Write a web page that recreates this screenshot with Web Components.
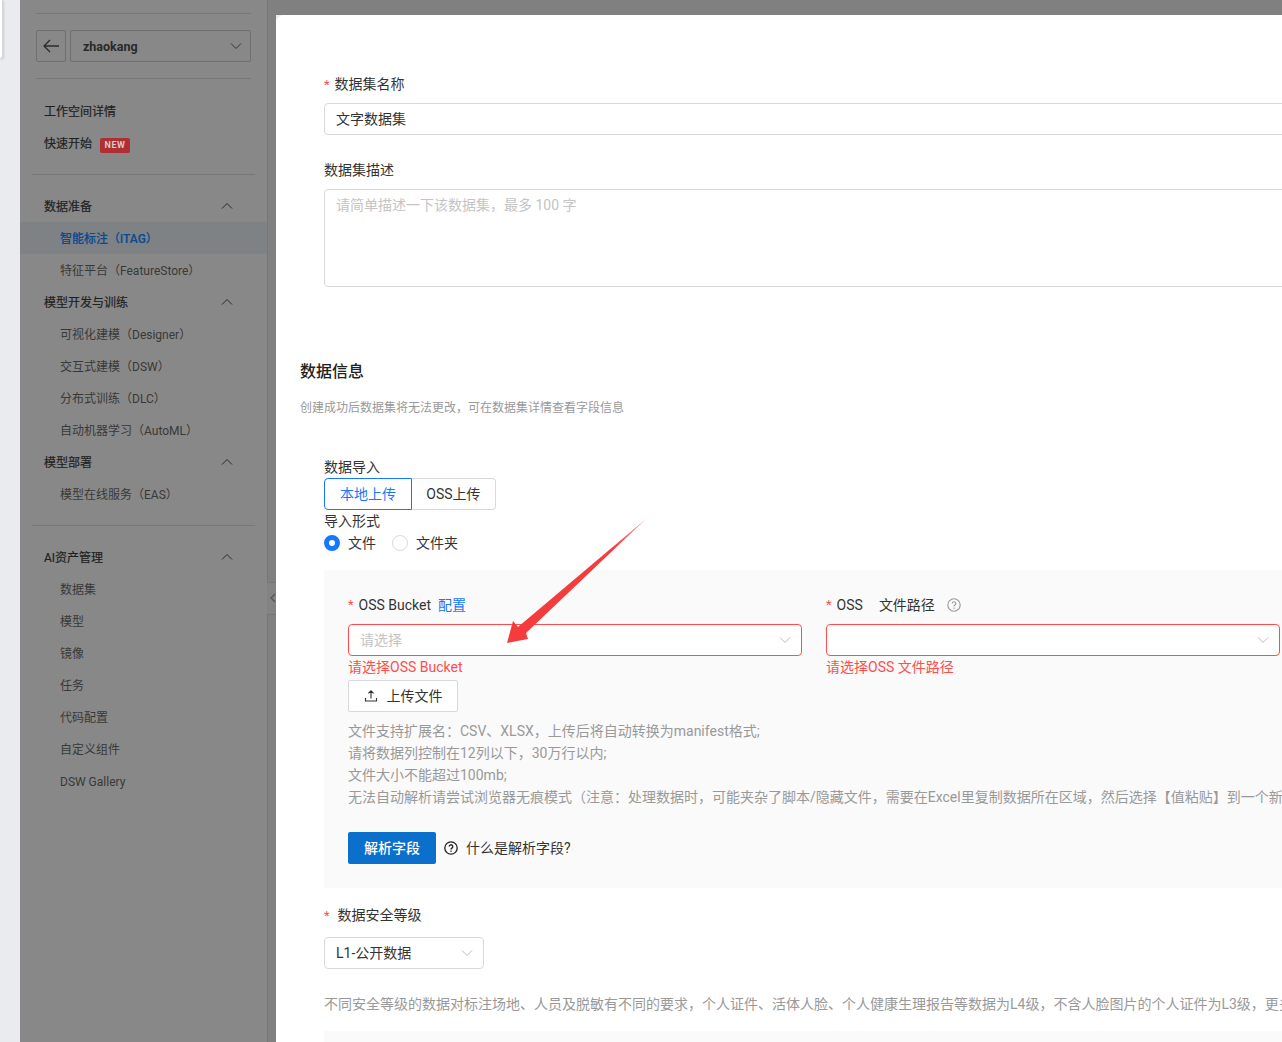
<!DOCTYPE html>
<html lang="zh"><head><meta charset="utf-8">
<style>
html,body{margin:0;height:100%;overflow:hidden}
body{font-family:Roboto,"Noto Sans CJK SC",sans-serif;background:#e9ebee;line-height:20px}
</style></head><body>
<app-shell>
  <side-nav slot="nav"></side-nav>
  <data-form slot="main"></data-form>
</app-shell>
<script>
const CHEV='<svg width="12" height="12" viewBox="0 0 12 12" fill="none" stroke="currentColor" stroke-width="1"><path d="M1 3.5 6 8.5 11 3.5"/></svg>';
const HELP=(c,s,w=1.1)=>`<svg width="${s}" height="${s}" viewBox="0 0 14 14" fill="none" stroke="${c}" stroke-width="${w}"><circle cx="7" cy="7" r="6.2"/><path d="M5.2 5.6a1.8 1.8 0 1 1 2.7 1.5c-.6.35-.9.7-.9 1.4"/><path d="M7 9.6v1.1"/></svg>`;
function def(name,css,html){customElements.define(name,class extends HTMLElement{
  constructor(){super();this.attachShadow({mode:'open'}).innerHTML=`<style>${css}</style>${typeof html==='function'?html(this):html}`}
})}

def('app-shell',`
:host{display:flex;width:1282px;height:1042px;overflow:hidden;position:relative;background:#e9ebee}
.left{width:20px;flex:none;position:relative}
.tab{position:absolute;left:0;top:0;width:2px;height:58px;background:#fff;border-right:1px solid #d5d6d8;border-bottom:1px solid #d5d6d8;border-radius:0 0 3px 0;box-shadow:1px 1px 2px rgba(0,0,0,.12)}
.rail{width:8px;flex:none;background:#808080;position:relative}
.col{position:absolute;left:-1px;top:582px;width:9px;height:33px;border-top:1px solid #777;border-bottom:1px solid #777;background:#838383;box-sizing:border-box}
.col svg{position:absolute;left:3px;top:10px}
.main{flex:none;margin-top:15px;width:1100px;background:#fff;border-radius:8px 0 0 0;overflow:hidden}
.top{position:absolute;left:268px;top:0;width:1014px;height:15px;background:#808080}
`,`<div class="left"><div class="tab"></div></div><slot name="nav"></slot><div class="rail"><div class="col"><svg width="6" height="10" viewBox="0 0 6 10" fill="none" stroke="#555" stroke-width="1.2"><path d="M5 1 1 5 5 9"/></svg></div></div><div class="top"></div><div class="main"><slot name="main"></slot></div>`);

def('nav-item',`
:host{display:flex;align-items:center;height:32px;box-sizing:border-box;padding-left:40px;padding-right:34px;font-size:12px;color:#383838;justify-content:space-between;white-space:nowrap}
:host([head]){padding-left:24px;color:#1f1f1f;-webkit-text-stroke:.2px #1f1f1f}
:host([active]){background:#7e8285;color:#0b4a8f;font-weight:500;-webkit-text-stroke:.15px #0b4a8f}
span{padding-top:2px}
svg{display:block;transform:rotate(180deg)}
`,t=>`<span><slot></slot></span>${t.hasAttribute('head')?CHEV.replace('stroke="currentColor"','stroke="#2b2b2b"'):''}`);

def('side-nav',`
:host{display:block;width:247px;height:1042px;flex:none;background:#888;border-right:1px solid #777;box-sizing:content-box;font-size:12px;color:#222;margin-right:0}
.line{height:1px;background:#777;margin:0 16px}
.top{margin-top:13px}
.sel{display:flex;gap:4px;margin:16px}
.back{width:28px;height:30px;border:1px solid #707070;border-radius:2px;display:flex;align-items:center;justify-content:center}
.box{flex:1;height:30px;border:1px solid #707070;border-radius:2px;display:flex;align-items:center;justify-content:space-between;padding:0 8px 0 12px;font-size:12.5px;font-weight:700;color:#2a2a2a}
.box span{padding-top:2px}
.quick{padding:16px 24px 15px;display:flex;flex-direction:column}
.quick div{height:32px;box-sizing:border-box;padding-top:2px;display:flex;align-items:center;color:#1f1f1f;gap:8px;-webkit-text-stroke:.2px #1f1f1f}
.new{font-size:9px;line-height:13px;height:15px;width:30px;justify-content:center;box-sizing:border-box;border-radius:2px;background:#b02f35;color:#d8c8c8;font-weight:700;display:flex;align-items:center;letter-spacing:.6px;-webkit-text-stroke:0;margin-top:2px}
.groups{padding:15px 0 15px}
.groups2{padding:15px 0}
.l2{margin:0 12px}
nav-item{display:flex}
`,`<div class="line top"></div>
<div class="sel"><div class="back"><svg width="18" height="16" viewBox="0 0 18 16" fill="none" stroke="#2b2b2b" stroke-width="1.3"><path d="M17 8H2M8 2 2 8l6 6"/></svg></div>
<div class="box"><span>zhaokang</span>${CHEV.replace('stroke="currentColor"','stroke="#333"')}</div></div>
<div class="line"></div>
<div class="quick"><div>工作空间详情</div><div>快速开始<span class="new">NEW</span></div></div>
<div class="line l2"></div>
<div class="groups">
<nav-item head>数据准备</nav-item><nav-item active>智能标注（iTAG）</nav-item><nav-item>特征平台（FeatureStore）</nav-item>
<nav-item head>模型开发与训练</nav-item><nav-item>可视化建模（Designer）</nav-item><nav-item>交互式建模（DSW）</nav-item><nav-item>分布式训练（DLC）</nav-item><nav-item>自动机器学习（AutoML）</nav-item>
<nav-item head>模型部署</nav-item><nav-item>模型在线服务（EAS）</nav-item>
</div>
<div class="line l2"></div>
<div class="groups2">
<nav-item head>AI资产管理</nav-item><nav-item>数据集</nav-item><nav-item>模型</nav-item><nav-item>镜像</nav-item><nav-item>任务</nav-item><nav-item>代码配置</nav-item><nav-item>自定义组件</nav-item><nav-item>DSW Gallery</nav-item>
</div>`);

def('form-select',`
:host{display:flex;align-items:center;justify-content:space-between;height:32px;box-sizing:border-box;border:1px solid #d9d9d9;border-radius:4px;background:#fff;padding:0 10px 0 11px;font-size:14px;color:#333}
:host([error]){border-color:#ff4d4f}
span{white-space:nowrap}
.ph{color:#c4c4c4}
svg{color:#bbb;display:block}
`,t=>`<span class="${t.hasAttribute('ph')?'ph':''}"><slot></slot></span>${CHEV}`);

def('data-form',`
:host{display:block;position:relative;width:1100px;height:1027px;font-size:14px;color:#333;overflow:hidden}
.w{position:absolute;inset:0;padding:0 0 0 24px;display:flex;flex-direction:column;width:1004px}
.in{margin-left:24px;width:980px;display:flex;flex-direction:column}
.lb{height:20px;line-height:20px;white-space:nowrap}
.req{color:#ff4d4f;margin-right:5px;font-size:13px}
.field{box-sizing:border-box;border:1px solid #d9d9d9;border-radius:4px;padding:0 11px;background:#fff}
.hr{height:1px;background:#eee;margin-top:48px}
h3{margin:27px 0 0;font-size:16px;line-height:20px;font-weight:500;color:#222}
.sub{font-size:12px;line-height:20px;color:#999;margin-top:16px}
.seg{display:flex;width:172px;height:32px}
.seg div{display:flex;align-items:center;justify-content:center;box-sizing:border-box;border:1px solid #d9d9d9}
.seg .a{width:88px;border-color:#1677ff;color:#1677ff;border-radius:4px 0 0 4px}
.seg .b{width:84px;border-left:0;border-radius:0 4px 4px 0}
.radios{display:flex;align-items:center;height:20px;margin-top:2px}
.r{width:16px;height:16px;box-sizing:border-box;border-radius:50%;border:1px solid #d9d9d9;margin-right:8px}
.r.on{border:5px solid #1677ff}
.panel{margin-top:17px;background:#fafafa;width:980px;height:318px;box-sizing:border-box;padding:25px 24px 0;display:flex;flex-direction:column}
.cols{display:grid;grid-template-columns:454px 454px;column-gap:24px}
.cols .lb{margin-bottom:9px;display:flex;align-items:center}
.err{color:#ff4d4f;line-height:22px;height:22px;white-space:nowrap}
.up{width:110px;height:32px;box-sizing:border-box;border:1px solid #d9d9d9;border-radius:2px;background:#fff;display:flex;align-items:center;justify-content:center;gap:9px;margin-top:2px}
.help{color:#999;font-size:14px;margin-top:8px;line-height:22px;white-space:nowrap}
.acts{display:flex;align-items:center;margin-top:24px}
.btn{width:88px;height:32px;background:#0a70cc;color:#fff;border-radius:2px;display:flex;align-items:center;justify-content:center;margin-right:8px;font-weight:500}
.acts span{margin-left:8px}
.link{color:#1677ff;margin-left:7px}
.lvl{width:160px;margin-top:12px}
.note{color:#999;margin-top:25px;line-height:20px;white-space:nowrap}
.last{margin-top:17px;height:40px;background:#fafafa}
.arrow{position:absolute;left:0;top:0;pointer-events:none}
`,`<div class="w">
<div class="in" style="margin-top:59px">
 <div class="lb"><span class="req">*</span>数据集名称</div>
 <div class="field" style="height:32px;margin-top:9px;line-height:30px">文字数据集</div>
 <div class="lb" style="margin-top:25px">数据集描述</div>
 <div class="field" style="height:98px;margin-top:9px;color:#c4c4c4;padding-top:5px;line-height:20px">请简单描述一下该数据集，最多 100 字</div>
</div>
<div class="hr"></div>
<h3>数据信息</h3>
<div class="sub">创建成功后数据集将无法更改，可在数据集详情查看字段信息</div>
<div class="in" style="margin-top:38px">
 <div class="lb" style="height:22px;line-height:22px">数据导入</div>
 <div class="seg"><div class="a">本地上传</div><div class="b">OSS上传</div></div>
 <div class="lb" style="margin-top:1px">导入形式</div>
 <div class="radios"><span class="r on"></span><span>文件</span><span class="r" style="margin-left:16px"></span><span>文件夹</span></div>
 <div class="panel">
  <div class="cols">
   <div><div class="lb"><span class="req">*</span>OSS Bucket<span class="link">配置</span></div><form-select error ph>请选择</form-select><div class="err">请选择OSS Bucket</div></div>
   <div><div class="lb"><span class="req">*</span>OSS<span style="margin-left:16px">文件路径</span><span style="margin-left:12px;display:flex">${HELP('#999',14)}</span></div><form-select error></form-select><div class="err">请选择OSS 文件路径</div></div>
  </div>
  <div class="up"><svg width="14" height="14" viewBox="0 0 14 14" fill="none" stroke="#333" stroke-width="1.1"><path d="M7 9.5V2M4.4 4.4 7 1.8l2.6 2.6M1.5 9v3h11V9"/></svg>上传文件</div>
  <div class="help">文件支持扩展名：CSV、XLSX，上传后将自动转换为manifest格式;<br>请将数据列控制在12列以下，30万行以内;<br>文件大小不能超过100mb;<br>无法自动解析请尝试浏览器无痕模式（注意：处理数据时，可能夹杂了脚本/隐藏文件，需要在Excel里复制数据所在区域，然后选择【值粘贴】到一个新的Excel文件中再上传）</div>
  <div class="acts"><div class="btn">解析字段</div>${HELP('#222',14,1.3)}<span>什么是解析字段?</span></div>
 </div>
 <div class="lb" style="margin-top:17px"><span class="req" style="margin-right:8px">*</span>数据安全等级</div>
 <form-select class="lvl">L1-公开数据</form-select>
 <div class="note">不同安全等级的数据对标注场地、人员及脱敏有不同的要求，个人证件、活体人脸、个人健康生理报告等数据为L4级，不含人脸图片的个人证件为L3级，更多信息请查看数据安全等级说明文档</div>
 <div class="last"></div>
</div>
</div>
<svg class="arrow" width="400" height="700" viewBox="276 15 400 700" style="overflow:visible">
<defs><linearGradient id="g" gradientUnits="userSpaceOnUse" x1="510" y1="640" x2="647" y2="518"><stop offset="0" stop-color="#f53c3c"/><stop offset=".75" stop-color="#f53c3c"/><stop offset="1" stop-color="#f53c3c" stop-opacity=".5"/></linearGradient></defs>
<path fill="url(#g)" d="M647 518 526 633 528 639 507 643 513 621 518 627Z"/></svg>`);
</script>
</body></html>
